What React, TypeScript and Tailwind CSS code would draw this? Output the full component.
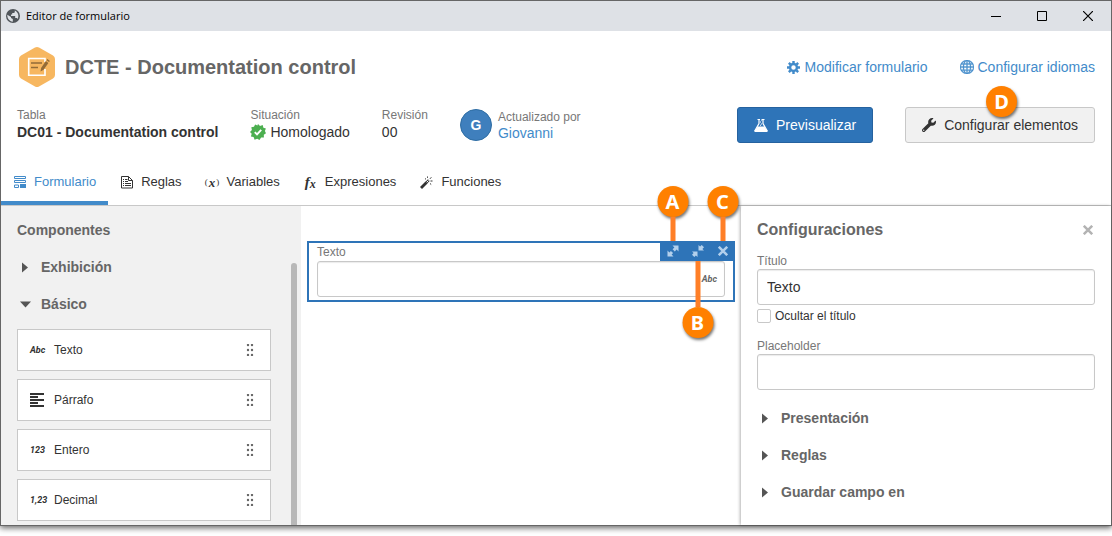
import { useState } from 'react'
import type { ReactNode } from 'react'
import { FaWrench } from 'react-icons/fa'
import { BsGlobe } from 'react-icons/bs'

const inputClass = 'h-9 w-full rounded-[3px] border border-[#c8c8c8] bg-white px-[9px] text-sm text-[#333] shadow-[inset_0_1px_1px_rgba(0,0,0,0.08)] outline-none'

function WorldIcon() {
    return (
        <svg width="14" height="14" viewBox="0 0 14 14">
            <circle cx="7" cy="7" r="7" fill="#50555a" />
            <path d="M1.300 5.800 5 8v1l1.800 1v2.700C3.500 12.500 1 9.500 1.300 5.800zM8.800 1.600v1.200q0 1.200-1.300 1.200H6.200v1.500H5V7h4.200v2h1.600l.9.9c1.300-2.600.800-6.600-2.900-8.300z" fill="#dee1e6" />
        </svg>
    )
}

function FormLogo() {
    return (
        <svg width="36" height="40" viewBox="0 0 36 40">
            <path d="M16 .6a4 4 0 0 1 4 0l14 8a4 4 0 0 1 2 3.400v16a4 4 0 0 1-2 3.400l-14 8a4 4 0 0 1-4 0l-14-8a4 4 0 0 1-2-3.400V12a4 4 0 0 1 2-3.400z" fill="#f7b760" />
            <path d="M26 15v-3.500H9.700v16.800H26V22" fill="none" stroke="#fff" strokeWidth="1.600" />
            <path d="M12 16h11M12 20.500h7" stroke="#936b37" strokeWidth="1.700" />
            <path d="m21.500 24.500.6-3.600 4.800-6.800 2.500 1.800-4.800 6.800z" fill="#936b37" />
            <path d="m27.500 13.300.9-1.200 2.500 1.800-.9 1.200z" fill="#936b37" />
        </svg>
    )
}

function CheckBadge() {
    return (
        <svg width="16" height="16" viewBox="0 0 16 16">
            <path d="m8 0 2 1.900 2.700-.8.7 2.600 2.500.9-1 2.500L16 9.200l-2.200 1.500.1 2.800-2.800.1L9.500 16 7.200 14.700l-2.600 1-1-2.600-2.700-.7.8-2.600L0 8l1.900-2-.6-2.700 2.700-.6L5.100.4l2.300 1z" fill="#4caf50" />
            <path d="m4.800 8.200 2.200 2.200 4.200-4.600" fill="none" stroke="#fff" strokeWidth="1.900" />
        </svg>
    )
}

function GearIcon() {
    return (
        <svg width="13" height="13" viewBox="0 0 14 14" fill="none" stroke="currentColor">
            <circle cx="7" cy="7" r="3.700" strokeWidth="2.600" />
            <path d="M7 0v2.500M7 11.500V14M0 7h2.500M11.500 7H14M2 2l1.800 1.800M10.200 10.200 12 12M12 2l-1.800 1.800M3.800 10.200 2 12" strokeWidth="2.600" />
        </svg>
    )
}

function FlaskIcon() {
    return (
        <svg width="14" height="13" viewBox="0 0 14 13" fill="#fff">
            <path d="M3.500 0H6v1H3.500zM8 0h2.500v1H8z" />
            <path d="M5 .5v4L1 11.500h12L9 4.500v-4" fill="none" stroke="#fff" strokeWidth="1.200" />
            <path d="M3.700 7.500h6.600l3.300 4.700q.3.800-.6.800H1q-.9 0-.6-.8z" />
            <path d="M6 2.500h1v1H6zM7 4.500h1v1H7zM7 .5h1v1H7zM6 5.800h1v1H6z" />
        </svg>
    )
}

function FormIcon() {
    return (
        <svg width="12" height="12" viewBox="0 0 12 12">
            <path d="M.5.5h11v2H.5zM.5 4.500h11v2H.5z" fill="#fff" stroke="currentColor" />
            <path d="M.5 9h4v2.500h-4z" fill="none" stroke="currentColor" />
            <path d="M6 8h6v4H6z" fill="currentColor" />
        </svg>
    )
}

function RulesIcon() {
    return (
        <svg width="12" height="13" viewBox="0 0 12 13" fill="none" stroke="currentColor">
            <path d="M7.500.5h-7v11.500h11V4.500z" />
            <path d="M7.500.5v4h4" />
            <path d="M2 3.500h1M4 3.500h2.500M2 5.500h1M4 5.500h3M2 7.500h1M4 7.500h6M2 9.500h1M4 9.500h6" />
        </svg>
    )
}

function WandIcon() {
    return (
        <svg width="13" height="13" viewBox="0 0 13 13" fill="none" stroke="currentColor">
            <path d="m1 12 5.500-5.500" strokeWidth="2.800" />
            <path d="m6 7 2.800-2.800" strokeWidth="2.400" />
            <path d="m6.700 6.300 1.800-1.800" stroke="#fff" strokeWidth="1" />
            <path d="M5 2.500l1 .8M7.500.5v1.300M10 2.800l1.300-1.500M10.500 5H12.500M10 7.500l1.200 1" strokeWidth="1" />
        </svg>
    )
}

function ExpandIcon() {
    return (
        <svg width="12" height="12" viewBox="0 0 12 12">
            <path d="M5.500.5h6v6L9.600 4.600 7.800 6.400 5.600 4.200l1.800-1.800zM6.500 11.500h-6v-6l1.900 1.900 1.500-1.500 2.200 2.200-1.500 1.500z" fill="#b3d0ec" />
        </svg>
    )
}

function ShrinkIcon() {
    return (
        <svg width="12" height="12" viewBox="0 0 12 12">
            <path d="M6.500 5.500V0l1.600 1.600L9.700 0 12 2.300l-1.600 1.600L12 5.500zM5.500 6.500V12l-1.600-1.600L2.300 12 0 9.700l1.600-1.600L0 6.500z" fill="#b3d0ec" />
        </svg>
    )
}

function CrossIcon() {
    return (
        <svg width="10" height="10" viewBox="0 0 10 10">
            <path d="m.8.8 8.400 8.400M9.200.8.8 9.200" stroke="currentColor" strokeWidth="2.500" />
        </svg>
    )
}

function ParagraphIcon() {
    return (
        <svg width="15" height="14" viewBox="0 0 15 14">
            <path d="M0 1h14M0 4h8M0 7h14M0 10h8M0 13h14" stroke="#333" strokeWidth="2" />
        </svg>
    )
}

function DragDots() {
    return (
        <svg width="8" height="12" viewBox="0 0 8 12" fill="#666">
            {[1, 6, 11].map((y) => (
                <g key={y}>
                    <circle cx="2" cy={y} r="1.200" />
                    <circle cx="6" cy={y} r="1.200" />
                </g>
            ))}
        </svg>
    )
}

function Marker({ children }: { children: ReactNode }) {
    return (
        <span className="flex h-[31px] w-[31px] shrink-0 items-center justify-center rounded-full bg-[#ff8000] font-['Noto_Sans','Open_Sans',sans-serif] text-xl font-bold leading-none text-white shadow-[1px_2px_3px_rgba(0,0,0,0.55)]">
            {children}
        </span>
    )
}

function GlyphText({ children }: { children: ReactNode }) {
    return <span className="font-[Roboto,'Liberation_Sans',sans-serif] text-[9px] font-bold italic leading-none">{children}</span>
}

const tabs = [
    { id: 'form', label: 'Formulario', icon: <FormIcon /> },
    { id: 'rules', label: 'Reglas', icon: <RulesIcon /> },
    { id: 'vars', label: 'Variables', icon: <span className="flex items-center font-['Liberation_Serif',serif] text-[9px] leading-none">(<b className="px-px text-[13px] italic leading-none">x</b>)</span> },
    { id: 'expr', label: 'Expresiones', icon: <span className="flex items-end font-['Liberation_Serif',serif] text-[15px] font-bold italic leading-none">f<b className="text-xs leading-none">x</b></span> },
    { id: 'func', label: 'Funciones', icon: <WandIcon /> },
]

const components = [
    { label: 'Texto', icon: <GlyphText>Abc</GlyphText> },
    { label: 'Párrafo', icon: <ParagraphIcon /> },
    { label: 'Entero', icon: <GlyphText>123</GlyphText> },
    { label: 'Decimal', icon: <GlyphText>1,23</GlyphText> },
]

function SectionToggle({ label, open = false }: { label: string; open?: boolean }) {
    return (
        <button type="button" aria-expanded={open} className="flex h-[37px] w-full items-center text-sm font-bold text-[#666]">
            <span className="flex w-6 pl-[3px]">
                <svg width="12" height="12" viewBox="0 0 12 12" fill="#555">
                    {open ? <path d="M0 3.500h11L5.500 9.500z" /> : <path d="M2 1.500v10l6-5z" />}
                </svg>
            </span>
            {label}
        </button>
    )
}

export default function App() {
    const [activeTab, setActiveTab] = useState('form')
    const [title, setTitle] = useState('Texto')
    const [placeholder, setPlaceholder] = useState('')

    return (
        <div className="h-screen overflow-hidden bg-white pb-2.5 font-['Liberation_Sans',Arial,sans-serif] text-[#333]">
            <div className="flex h-full flex-col border border-[#666] bg-white shadow-[0_2px_6px_rgba(0,0,0,0.6)]">

                {/* Title bar */}
                <div className="flex h-[30px] shrink-0 items-center bg-[#dee1e6] pl-[5px] pr-[18px] text-black">
                    <WorldIcon />
                    <span className="ml-1.5 flex-1 font-['Open_Sans','Noto_Sans',sans-serif] text-[11px]">Editor de formulario</span>
                    <div className="flex items-center gap-9">
                        <button type="button" aria-label="Minimizar">
                            <svg width="10" height="10" viewBox="0 0 10 10"><path d="M0 5.500h10" stroke="currentColor" /></svg>
                        </button>
                        <button type="button" aria-label="Maximizar">
                            <svg width="10" height="10" viewBox="0 0 10 10"><path d="M.5.5h9v9h-9z" fill="none" stroke="currentColor" /></svg>
                        </button>
                        <button type="button" aria-label="Cerrar ventana">
                            <svg width="10" height="10" viewBox="0 0 10 10"><path d="m0 0 10 10M10 0 0 10" stroke="currentColor" strokeWidth="1.200" /></svg>
                        </button>
                    </div>
                </div>

                {/* Header */}
                <header className="shrink-0 px-4 pt-4">
                    <div className="flex h-10 items-center">
                        <div className="ml-0.5 mr-2.5"><FormLogo /></div>
                        <h1 className="flex-1 text-xl font-bold text-[#666]">DCTE - Documentation control</h1>
                        <div className="flex gap-8 text-sm text-[#428bca]">
                            <a href="#modificar" className="flex items-center gap-[5px]"><GearIcon />Modificar formulario</a>
                            <a href="#idiomas" className="flex items-center gap-1"><BsGlobe size={14} stroke="currentColor" strokeWidth={0.4} />Configurar idiomas</a>
                        </div>
                    </div>

                    <div className="mt-5 flex h-9 gap-8">
                        <div>
                            <p className="text-xs/4 text-[#777]">Tabla</p>
                            <p className="text-sm/[18px] font-bold">DC01 - Documentation control</p>
                        </div>
                        <div>
                            <p className="text-xs/4 text-[#777]">Situación</p>
                            <p className="flex items-center gap-1 text-sm/[18px]"><CheckBadge />Homologado</p>
                        </div>
                        <div>
                            <p className="text-xs/4 text-[#777]">Revisión</p>
                            <p className="text-sm/[18px]">00</p>
                        </div>
                        <div className="flex flex-1 items-center gap-1.5">
                            <span className="flex h-8 w-8 items-center justify-center rounded-full border border-[#2e6da4] bg-[#3f7fbd] text-sm font-bold text-white">G</span>
                            <div>
                                <p className="text-xs/4 text-[#777]">Actualizado por</p>
                                <a href="#giovanni" className="block text-sm/4 text-[#428bca]">Giovanni</a>
                            </div>
                        </div>
                        <button type="button" className="flex items-center gap-2 rounded-[3px] border border-[#25629f] bg-[#2e74b8] px-4 text-sm text-white">
                            <FlaskIcon />Previsualizar
                        </button>
                        <button type="button" className="relative flex items-center gap-2 rounded-[3px] border border-[#c8c8c8] bg-[#f1f1f1] px-4 text-sm">
                            <FaWrench size={14} />Configurar elementos
                            <span className="absolute -top-[22px] left-20"><Marker>D</Marker></span>
                        </button>
                    </div>
                </header>

                {/* Tabs */}
                <nav className="mt-4 flex shrink-0 border-b border-[#c8c8c8]">
                    {tabs.map((tab) => (
                        <button
                            key={tab.id}
                            type="button"
                            onClick={() => setActiveTab(tab.id)}
                            className={`flex h-[46px] items-center gap-2 border-b-4 px-3 pt-1 text-[13px] ${activeTab === tab.id ? 'border-[#428bca] text-[#428bca]' : 'border-transparent'}`}
                        >
                            <span className="flex w-[13px] justify-center">{tab.icon}</span>
                            {tab.label}
                        </button>
                    ))}
                </nav>

                <div className="flex min-h-0 flex-1">
                    {/* Component list */}
                    <aside className="flex w-[300px] shrink-0 overflow-hidden bg-[#f1f1f1] pr-1">
                        <div className="flex-1 pl-4 pr-5 pt-3.5">
                            <h2 className="mb-2 text-sm/5 font-bold text-[#666]">Componentes</h2>
                            <SectionToggle label="Exhibición" />
                            <SectionToggle label="Básico" open />
                            <ul className="mt-[7px] flex flex-col gap-2">
                                {components.map((c) => (
                                    <li key={c.label} className="flex h-[42px] items-center border border-[#c8c8c8] bg-white pl-3 pr-4 text-xs">
                                        <span className="flex w-6">{c.icon}</span>
                                        <span className="flex-1">{c.label}</span>
                                        <DragDots />
                                    </li>
                                ))}
                            </ul>
                        </div>
                        <div className="mt-[57px] w-1.5 rounded-t-full bg-[#b8b8b8]" />
                    </aside>

                    {/* Canvas */}
                    <main className="min-w-0 flex-1 px-1.5 pt-[35px]">
                        <div className="relative border-2 border-[#2e74b8] px-2 pb-[3px]">
                            <label htmlFor="field" className="block text-xs/[18px] text-[#777]">Texto</label>
                            <div className="relative">
                                <input id="field" type="text" className={inputClass} />
                                <span className="absolute right-2 top-3.5 flex text-[#666]"><GlyphText>Abc</GlyphText></span>
                            </div>
                            <div className="absolute -right-0.5 -top-0.5 flex h-5 bg-[#2e74b8] text-[#b3d0ec]">
                                <button type="button" aria-label="Expandir" className="relative flex w-[25px] items-center justify-center">
                                    <ExpandIcon />
                                    <span className="absolute bottom-full left-1/2 flex -translate-x-1/2 flex-col items-center">
                                        <Marker>A</Marker>
                                        <span className="h-6 w-[5px] bg-[#ff7f27]" />
                                    </span>
                                </button>
                                <button type="button" aria-label="Reducir" className="relative flex w-[25px] items-center justify-center">
                                    <ShrinkIcon />
                                    <span className="absolute left-1/2 top-full flex -translate-x-1/2 flex-col items-center">
                                        <span className="h-[46px] w-[5px] bg-[#ff7f27]" />
                                        <Marker>B</Marker>
                                    </span>
                                </button>
                                <button type="button" aria-label="Eliminar" className="relative flex w-[25px] items-center justify-center">
                                    <CrossIcon />
                                    <span className="absolute bottom-full left-1/2 flex -translate-x-1/2 flex-col items-center">
                                        <Marker>C</Marker>
                                        <span className="h-6 w-[5px] bg-[#ff7f27]" />
                                    </span>
                                </button>
                            </div>
                        </div>
                    </main>

                    {/* Settings */}
                    <aside className="w-[370px] shrink-0 bg-white px-4 pt-3 shadow-[-1px_0_3px_rgba(0,0,0,0.3)]">
                        <div className="flex h-6 items-center justify-between pr-0.5">
                            <h2 className="text-base font-bold text-[#666]">Configuraciones</h2>
                            <button type="button" aria-label="Cerrar" className="text-[#b3b3b3]"><CrossIcon /></button>
                        </div>
                        <label htmlFor="title" className="mt-[11px] block text-xs/4 text-[#777]">Título</label>
                        <input id="title" type="text" value={title} onChange={(e) => setTitle(e.target.value)} className={inputClass} />
                        <label className="flex h-[22px] items-center gap-1 text-xs">
                            <input type="checkbox" className="h-3.5 w-3.5 appearance-none rounded-[2px] border border-[#c8c8c8] bg-white checked:bg-[#428bca]" />
                            Ocultar el título
                        </label>
                        <label htmlFor="placeholder" className="mt-[11px] block text-xs/4 text-[#777]">Placeholder</label>
                        <input id="placeholder" type="text" value={placeholder} onChange={(e) => setPlaceholder(e.target.value)} className={inputClass} />
                        <div className="mt-[9px]">
                            <SectionToggle label="Presentación" />
                            <SectionToggle label="Reglas" />
                            <SectionToggle label="Guardar campo en" />
                        </div>
                    </aside>
                </div>
            </div>
        </div>
    )
}
